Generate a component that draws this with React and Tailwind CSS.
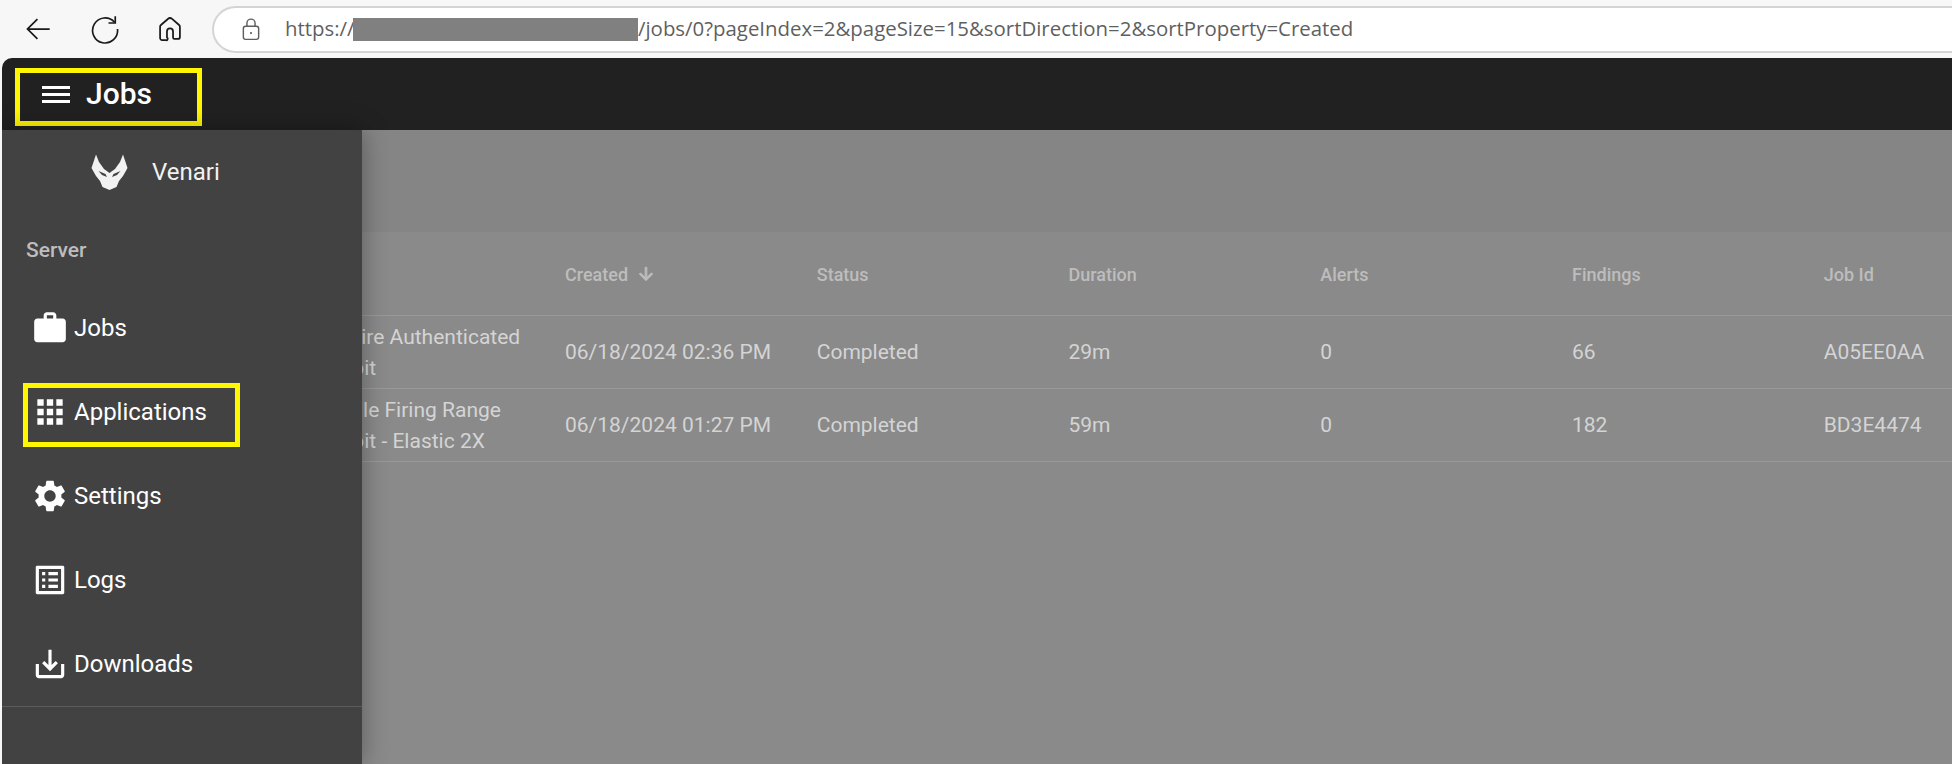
import React from "react";

const roboto = "font-['Roboto',sans-serif]";

const paths = {
  work: "M20 6h-4V4c0-1.11-.89-2-2-2h-4c-1.11 0-2 .89-2 2v2H4c-1.11 0-1.99.89-1.99 2L2 19c0 1.11.89 2 2 2h16c1.11 0 2-.89 2-2V8c0-1.11-.89-2-2-2zm-6 0h-4V4h4v2z",
  apps: "M4 8h4V4H4v4zm6 12h4v-4h-4v4zm-6 0h4v-4H4v4zm0-6h4v-4H4v4zm6 0h4v-4h-4v4zm6-10v4h4V4h-4zm-6 4h4V4h-4v4zm6 6h4v-4h-4v4zm0 6h4v-4h-4v4z",
  settings: "M19.14 12.94c.04-.3.06-.61.06-.94 0-.32-.02-.64-.07-.94l2.03-1.58c.18-.14.23-.41.12-.61l-1.92-3.32c-.12-.22-.37-.29-.59-.22l-2.39.96c-.5-.38-1.03-.7-1.62-.94l-.36-2.54c-.04-.24-.24-.41-.48-.41h-3.84c-.24 0-.43.17-.47.41l-.36 2.54c-.59.24-1.13.57-1.62.94l-2.39-.96c-.22-.08-.47 0-.59.22L2.74 8.87c-.12.21-.08.47.12.61l2.03 1.58c-.05.3-.09.63-.09.94s.02.64.07.94l-2.03 1.58c-.18.14-.23.41-.12.61l1.92 3.32c.12.22.37.29.59.22l2.39-.96c.5.38 1.03.7 1.62.94l.36 2.54c.05.24.24.41.48.41h3.84c.24 0 .44-.17.47-.41l.36-2.54c.59-.24 1.13-.56 1.62-.94l2.39.96c.22.08.47 0 .59-.22l1.92-3.32c.12-.22.07-.47-.12-.61l-2.01-1.58zM12 15.6c-1.98 0-3.6-1.62-3.6-3.6s1.62-3.6 3.6-3.6 3.6 1.62 3.6 3.6-1.62 3.6-3.6 3.6z",
  logs: "M19 5v14H5V5h14m1.1-2H3.9c-.5 0-.9.4-.9.9v16.2c0 .4.4.9.9.9h16.2c.4 0 .9-.5.9-.9V3.9c0-.5-.5-.9-.9-.9zM11 7h6v2h-6V7zm0 4h6v2h-6v-2zm0 4h6v2h-6zM7 7h2v2H7zm0 4h2v2H7zm0 4h2v2H7z",
  downloads: "M19 12v7H5v-7H3v7c0 1.1.9 2 2 2h14c1.1 0 2-.9 2-2v-7h-2zm-6 .67l2.59-2.58L17 11.5l-5 5-5-5 1.41-1.41L11 12.67V3h2z",
};

function MuiIcon({ d, className }) {
  return (
    <svg viewBox="0 0 24 24" fill="currentColor" className={className}>
      <path d={d} />
    </svg>
  );
}

function NavItem({ icon, label, active }) {
  return (
    <div className={`flex h-[84px] shrink-0 items-center ${active ? "relative" : ""}`}>
      <div className="ml-[29px] flex items-center">
        <MuiIcon d={icon} className="h-[38px] w-[38px] text-white" />
        <span className={`${roboto} ml-[5px] text-[24px] leading-none text-white`}>{label}</span>
      </div>
      {active && (
        <div className="absolute left-[21px] top-[13px] h-[64px] w-[217px] border-[5px] border-[#fff700]" />
      )}
    </div>
  );
}

const columns = ["Created", "Status", "Duration", "Alerts", "Findings", "Job Id"];
const rows = [
  {
    name: "Acquire Authenticated Exploit",
    cells: ["06/18/2024 02:36 PM", "Completed", "29m", "0", "66", "A05EE0AA"],
  },
  {
    name: "Google Firing Range Exploit - Elastic 2X",
    cells: ["06/18/2024 01:27 PM", "Completed", "59m", "0", "182", "BD3E4474"],
  },
];

export default function App() {
  return (
    <div className="flex h-[764px] w-[1952px] flex-col overflow-hidden bg-[#f7f7f7]">
      {/* browser chrome */}
      <div className="flex h-[58px] shrink-0 items-center">
        <svg viewBox="0 0 24 24" className="ml-[24px] h-[28px] w-[28px] text-[#1a1a1a]" fill="none" stroke="currentColor" strokeWidth="1.5">
          <path d="M22 12H3M11.5 3.5 3 12l8.5 8.5" />
        </svg>
        <svg viewBox="0 0 24 24" className="ml-[38px] h-[30px] w-[30px] text-[#1a1a1a]" fill="none" stroke="currentColor" strokeWidth="1.35">
          <path d="M19.6 6.6A10 10 0 1 0 22 12" />
          <path d="M20.2 1.8v5.4h-5.4" />
        </svg>
        <svg viewBox="0 0 24 24" className="ml-[36px] h-[28px] w-[28px] text-[#1a1a1a]" fill="none" stroke="currentColor" strokeWidth="1.5" strokeLinejoin="round">
          <path d="M10.2 3.4a2.7 2.7 0 0 1 3.6 0l6 5.200c.5.4.7 1 .7 1.600v8.600a1.700 1.700 0 0 1-1.700 1.700h-3a1.200 1.200 0 0 1-1.200-1.200v-5.200a2.600 2.600 0 0 0-5.200 0v5.200A1.200 1.200 0 0 1 8.200 21.500h-3a1.700 1.700 0 0 1-1.700-1.700v-9.600c0-.6.2-1.200.7-1.600z" />
        </svg>
        <div className="ml-[28px] flex h-[47px] flex-1 items-center rounded-l-[24px] border-y-2 border-l-2 border-[#d4d4d4] bg-white">
          <svg viewBox="0 0 20 26" className="ml-[28px] h-[24px] w-[18px] text-[#5f5f5f]" fill="none" stroke="currentColor" strokeWidth="1.6">
            <path d="M5.500 10V6.500a4.500 4.500 0 0 1 9 0V10" />
            <rect x="1.500" y="10" width="17" height="14.500" rx="2.500" />
            <circle cx="10" cy="17.500" r="1.200" fill="currentColor" stroke="none" />
          </svg>
          <span className="mb-[2px] ml-[25px] w-[68px] whitespace-nowrap font-['Open_Sans',sans-serif] text-[20.4px] leading-none text-[#5f5f5f]">https://</span>
          <div className="h-[23px] w-[285px] bg-[#808080]" />
          <span className="mb-[2px] whitespace-nowrap font-['Open_Sans',sans-serif] text-[20.4px] leading-none text-[#5f5f5f]">/jobs/0?pageIndex=2&amp;pageSize=15&amp;sortDirection=2&amp;sortProperty=Created</span>
        </div>
      </div>

      {/* application */}
      <div className="relative ml-[2px] flex min-h-0 flex-1 flex-col overflow-hidden rounded-tl-[10px]">
        <div className="flex h-[72px] shrink-0 items-start bg-[#212121] pt-[10px]">
          <div className="ml-[13px] flex h-[58px] w-[187px] items-center border-[5px] border-[#fff700] pb-[6px]">
            <div className="ml-[22px] flex w-[28px] flex-col gap-[4px]">
              <div className="h-[3px] bg-white" />
              <div className="h-[3px] bg-white" />
              <div className="h-[3px] bg-white" />
            </div>
            <span className={`${roboto} ml-[16px] text-[30px] font-medium leading-none text-white`}>Jobs</span>
          </div>
        </div>

        <div className="h-[102px] shrink-0 bg-[#858585]" />

        <div className={`${roboto} flex-1 bg-[#8a8a8a] pl-[311px]`}>
          <div className="flex h-[84px] w-[1764px] items-center border-b border-[#999999] pt-[1px]">
            <div className="w-[252px] shrink-0" />
            {columns.map((c, i) => (
              <div key={c} className="flex w-[251.75px] shrink-0 items-center text-[18px] font-medium text-[#bdbdbd]">
                {c}
                {i === 0 && (
                  <svg viewBox="0 0 24 24" fill="currentColor" stroke="currentColor" strokeWidth="1.2" className="ml-[8px] h-[20px] w-[20px]">
                    <path d="m20 12-1.410-1.410L13 16.170V4h-2v12.170l-5.580-5.590L4 12l8 8 8-8z" />
                  </svg>
                )}
              </div>
            ))}
          </div>
          {rows.map((r) => (
            <div key={r.name} className="flex h-[73px] w-[1764px] items-center border-b border-[#999999] pt-[2px] text-[21px] text-[#d4d4d4]">
              <div className="w-[252px] shrink-0 pr-[30px] leading-[31px]">{r.name}</div>
              {r.cells.map((c, i) => (
                <div key={i} className="w-[251.75px] shrink-0 whitespace-nowrap">{c}</div>
              ))}
            </div>
          ))}
        </div>

        {/* drawer */}
        <aside className="absolute bottom-0 left-0 top-[72px] flex w-[360px] flex-col bg-[#424242] shadow-[0_0_24px_rgba(0,0,0,0.35)]">
          <div className="flex h-[84px] shrink-0 items-center">
            <svg viewBox="0 0 37 36" className="ml-[89px] h-[36px] w-[37px] text-[#f2f2f2]" fill="currentColor">
              <path d="M5 0.500 8 8l5 7 5.500 4 5.500-4 5-7 3-7.500L36.500 14 32 22l-4 5-2.500 6-7 3-7-3L9 27l-4-5L.5 14z" />
              <path d="M7.500 17l7 3 1.500 3-5-2zM29.500 17l-7 3-1.500 3 5-2z" fill="#424242" />
            </svg>
            <span className={`${roboto} ml-[24px] text-[24px] leading-none text-[#f2f2f2]`}>Venari</span>
          </div>
          <div className={`${roboto} mb-[11px] mt-[13px] flex h-[48px] shrink-0 items-center pl-[24px] text-[21px] font-medium text-[#bdbdbd]`}>Server</div>
          <NavItem icon={paths.work} label="Jobs" />
          <NavItem icon={paths.apps} label="Applications" active />
          <NavItem icon={paths.settings} label="Settings" />
          <NavItem icon={paths.logs} label="Logs" />
          <NavItem icon={paths.downloads} label="Downloads" />
          <div className="h-px shrink-0 bg-[#5c5c5c]" />
        </aside>
      </div>
    </div>
  );
}
